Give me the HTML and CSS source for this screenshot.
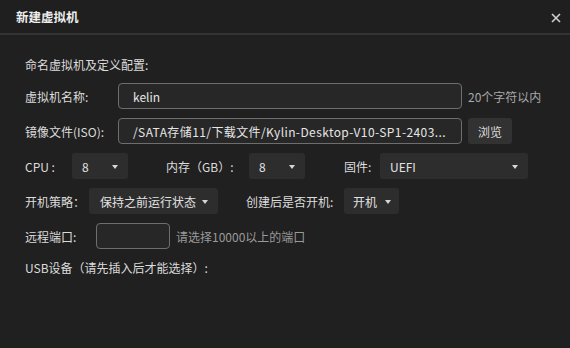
FILE: index.html
```html
<!DOCTYPE html>
<html lang="zh">
<head>
<meta charset="utf-8">
<link rel="stylesheet" href="styles.css">
</head>
<body>
<div class="dialog">
  <div class="header">
    <span class="title">新建虚拟机</span>
    <svg class="close" width="10" height="10" viewBox="0 0 10 10"><path d="M1 1L9 9M9 1L1 9" stroke="#d0d0d0" stroke-width="1.6" fill="none"/></svg>
  </div>
  <div class="content">
    <div class="intro">命名虚拟机及定义配置:</div>
    <div class="row">
      <span class="label wide">虚拟机名称:</span>
      <div class="input long"><span>kelin</span></div>
      <span class="hint light">20个字符以内</span>
    </div>
    <div class="row">
      <span class="label wide">镜像文件(ISO):</span>
      <div class="input long path"><span>/SATA存储11/下载文件/Kylin-Desktop-V10-SP1-2403...</span></div>
      <button class="btn">浏览</button>
    </div>
    <div class="row">
      <span class="label cpu">CPU :</span>
      <div class="select s-num"><span>8</span><i class="arrow"></i></div>
      <span class="label mem">内存（GB）:</span>
      <div class="select s-num"><span>8</span><i class="arrow"></i></div>
      <span class="label fw">固件:</span>
      <div class="select s-fw"><span>UEFI</span><i class="arrow"></i></div>
    </div>
    <div class="row">
      <span class="label policy">开机策略：</span>
      <div class="select s-policy"><span>保持之前运行状态</span><i class="arrow"></i></div>
      <span class="label boot">创建后是否开机:</span>
      <div class="select s-boot"><span>开机</span><i class="arrow"></i></div>
    </div>
    <div class="row">
      <span class="label port">远程端口:</span>
      <div class="input short"></div>
      <span class="hint">请选择10000以上的端口</span>
    </div>
    <div class="usb">USB设备（请先插入后才能选择）:</div>
  </div>
</div>
</body>
</html>
```
FILE: styles.css
```css
* { box-sizing: border-box; }
html, body { margin: 0; padding: 0; }
body {
  width: 570px;
  height: 348px;
  background: #202020;
  font-family: "Noto Sans CJK SC", "Noto Sans", sans-serif;
  font-size: 12px;
  color: #dcdcdc;
  overflow: hidden;
}
.dialog { width: 570px; height: 348px; }
.header {
  height: 35px;
  border-bottom: 2px solid #343434;
  display: flex;
  align-items: center;
  justify-content: space-between;
  padding: 0 9px 0 16px;
  background: #1f1f1f;
}
.title { font-size: 12.5px; font-weight: bold; color: #eeeeee; }
.close { margin-top: 2px; }
.content { padding: 22px 0 0 25px; }
.intro { line-height: 16px; height: 16px; }
.row {
  display: flex;
  align-items: center;
  height: 26px;
  margin-top: 9px;
}
.intro + .row { margin-top: 10px; }
.label { white-space: nowrap; }
.label.wide { width: 93px; }
.label.cpu { width: 47px; }
.label.mem { margin-left: 38px; width: 83px; }
.label.fw { margin-left: 39px; width: 36px; }
.label.policy { width: 64px; }
.label.boot { margin-left: 28px; width: 98px; }
.label.port { width: 71px; }
.input {
  height: 26px;
  border: 1.5px solid #6e6e6e;
  border-radius: 4px;
  background: #272727;
  display: flex;
  align-items: center;
  padding-left: 14px;
  color: #e6e6e6;
  white-space: nowrap;
  overflow: hidden;
}
.input.long { width: 344px; }
.input.path { letter-spacing: 0.4px; }
.input.short { width: 74px; }
.hint { color: #9a9a9a; margin-left: 6px; white-space: nowrap; }
.hint.light { color: #a8a8a8; }
.btn {
  margin-left: 6px;
  width: 44px;
  height: 26px;
  border: none;
  border-radius: 3px;
  background: #323232;
  color: #dcdcdc;
  font-family: inherit;
  font-size: 12px;
  padding: 0;
}
.select {
  height: 26px;
  border-radius: 3px;
  background: #2d2d2d;
  display: flex;
  align-items: center;
  justify-content: space-between;
  padding: 0 10px 0 10px;
  color: #e2e2e2;
  white-space: nowrap;
}
.s-num { width: 56px; }
.s-fw { width: 148px; }
.s-policy { width: 129px; padding-left: 11px; }
.s-boot { width: 55px; padding-left: 9px; padding-right: 8px; }
.arrow {
  display: block;
  width: 0;
  height: 0;
  border-left: 3.5px solid transparent;
  border-right: 3.5px solid transparent;
  border-top: 4px solid #d6d6d6;
  margin-top: 1px;
}
.usb { margin-top: 11px; line-height: 16px; }
```
